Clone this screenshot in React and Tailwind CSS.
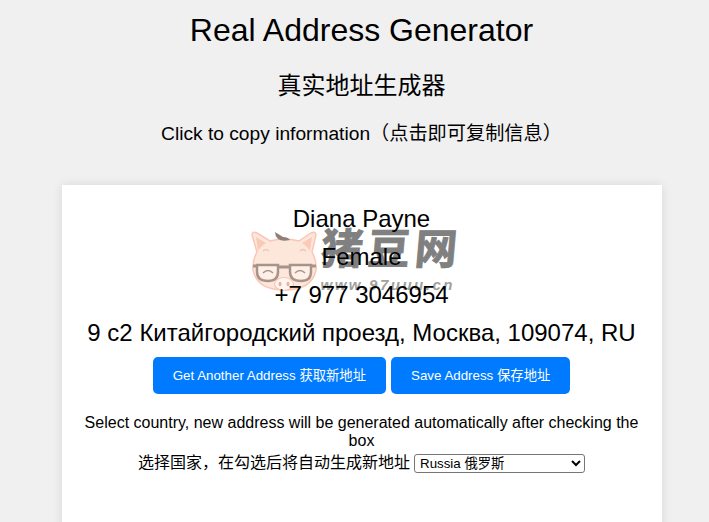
import React from 'react';

const FONT = "font-['Liberation_Sans','Noto_Sans_CJK_SC',sans-serif]";

// watermark is drawn inside the card, under the text lines
const Watermark = () => (
  <div className="absolute left-[186px] top-[43px] w-[217px] h-[75px] pointer-events-none">
    <svg className="absolute left-0 top-0" width="74" height="72" viewBox="0 0 74 72" fill="none">
      <path d="M9 24 L4 7 Q4 3 9 5 L22 13 Q36 9 51 13 L63 5 Q68 3 68 7 L64 24 Q69 33 68 42 Q64 62 36 62 Q9 62 5 42 Q4 33 9 24Z" fill="#fde7db" stroke="#fbc6b4" strokeWidth="1.5" />
      <path d="M8 9 L18 15 Q12 19 10 23Z" fill="#fbc9b8" />
      <path d="M64 9 L54 15 Q60 19 62 23Z" fill="#fbc9b8" />
      <path d="M27 4 Q32 7 35 9 Q40 9 42 12 Q34 14 30 11 Q27 8 27 4Z" fill="#8f7f79" />
      <path d="M15 23 Q18 20 21 23 M52 23 Q55 20 58 23" stroke="#eec2b1" strokeWidth="1.2" />
      <path d="M5 38 L9 38 M30 39 L42 39 M63 38 L68 38" stroke="#a8938b" strokeWidth="3" />
      <path d="M9 37 H30 V44 Q30 53 20 53 Q9 53 9 44Z" fill="#fff3ec" fillOpacity="0.7" stroke="#a8938b" strokeWidth="2.5" />
      <path d="M42 37 H63 V44 Q63 53 53 53 Q42 53 42 44Z" fill="#fff3ec" fillOpacity="0.7" stroke="#a8938b" strokeWidth="2.5" />
      <path d="M15 45 Q20 40 25 45 M47 45 Q52 40 57 45" stroke="#a8938b" strokeWidth="1.5" />
      <ellipse cx="36" cy="56" rx="9.5" ry="6.5" fill="#fff6f2" stroke="#fbc6b4" strokeWidth="1.2" />
      <ellipse cx="32" cy="56" rx="1.5" ry="2.2" fill="#f3ab9b" />
      <ellipse cx="40" cy="56" rx="1.5" ry="2.2" fill="#f3ab9b" />
    </svg>
    <div className={`absolute left-[73px] top-[-3px] text-[42px] leading-[50px] font-bold text-[#808080] tracking-[5px] whitespace-nowrap skew-x-[-5deg] [-webkit-text-stroke:1px_#808080] ${FONT}`}>
      猪豆网
    </div>
    <div className={`absolute left-[73px] top-[48px] text-[15px] leading-[18px] font-bold italic text-[#a0a0a0] tracking-[2.5px] whitespace-nowrap ${FONT}`}>
      www.97uuu.cn
    </div>
  </div>
);

const App = () => {
  return (
    <div className={`w-[709px] h-[522px] overflow-hidden bg-[#f0f0f0] text-black ${FONT}`}>
      <div className="w-[723px] text-center">
        <div className="pt-3">
          <h1 className="text-[32px] leading-[37px]">Real Address Generator</h1>
          <h2 className="mt-[23px] text-2xl leading-7">真实地址生成器</h2>
          <p className="mt-[22px] text-[19.2px] leading-[23px]">Click to copy information（点击即可复制信息）</p>
        </div>

        <div className="relative mx-auto mt-10 w-[600px] h-[400px] bg-white p-5 shadow-[0_0_10px_rgba(0,0,0,0.1)]">
          <Watermark />

          <div className="relative flex flex-col gap-2.5 text-2xl leading-7">
            <div>Diana Payne</div>
            <div>Female</div>
            <div>+7 977 3046954</div>
            <div className="whitespace-nowrap">9 с2 Китайгородский проезд, Москва, 109074, RU</div>
          </div>

          <div className="mt-2.5 flex justify-center gap-[5px]">
            <button className="h-[37px] px-5 pt-px rounded-[5px] bg-[#007bff] text-white text-[13.33px]">Get Another Address 获取新地址</button>
            <button className="h-[37px] px-5 pt-px rounded-[5px] bg-[#007bff] text-white text-[13.33px]">Save Address 保存地址</button>
          </div>

          <div className="mt-5 text-base leading-[18px]">
            Select country, new address will be generated automatically after checking the box
            <div className="mt-[2px] flex justify-center items-center gap-1 leading-[22px]">
              <span>选择国家，在勾选后将自动生成新地址</span>
              <select className="w-[171px] h-[19px] rounded-[3px] border border-[#767676] bg-white text-[13.33px] leading-[15px] pl-[1px]" defaultValue="ru">
                <option value="ru">Russia 俄罗斯</option>
              </select>
            </div>
          </div>
        </div>
      </div>
    </div>
  );
};

export default App;
